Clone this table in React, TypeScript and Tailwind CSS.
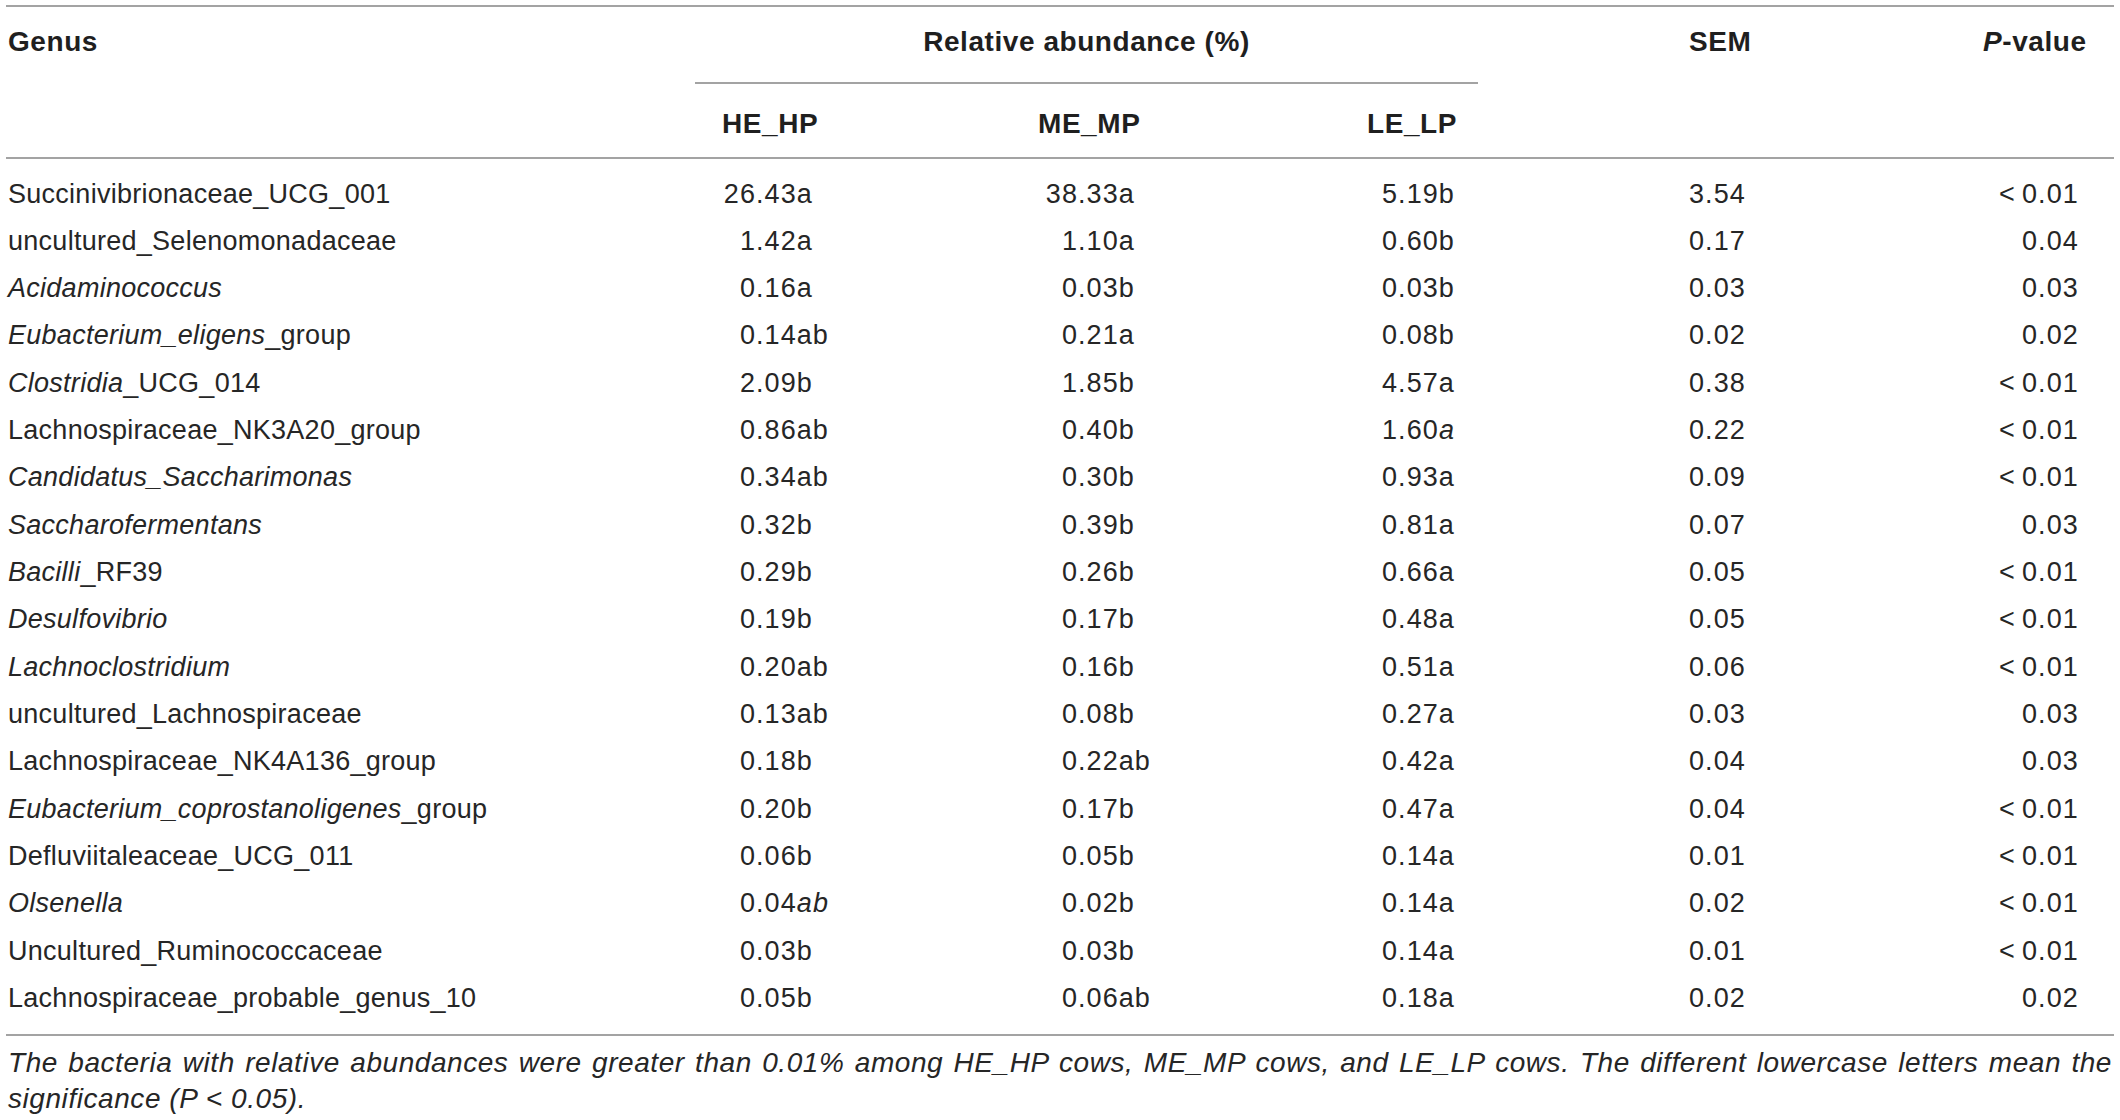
import React from "react";

// genus text: parts wrapped in * are italic
// value text: part after * is italic
const rows: [string, string, string, string, string, string][] = [
  ["Succinivibrionaceae_UCG_001", "26.43a", "38.33a", "5.19b", "3.54", "<0.01"],
  ["uncultured_Selenomonadaceae", "1.42a", "1.10a", "0.60b", "0.17", "0.04"],
  ["*Acidaminococcus*", "0.16a", "0.03b", "0.03b", "0.03", "0.03"],
  ["*Eubacterium_eligens*_group", "0.14ab", "0.21a", "0.08b", "0.02", "0.02"],
  ["*Clostridia*_UCG_014", "2.09b", "1.85b", "4.57a", "0.38", "<0.01"],
  ["Lachnospiraceae_NK3A20_group", "0.86ab", "0.40b", "1.60*a", "0.22", "<0.01"],
  ["*Candidatus_Saccharimonas*", "0.34ab", "0.30b", "0.93a", "0.09", "<0.01"],
  ["*Saccharofermentans*", "0.32b", "0.39b", "0.81a", "0.07", "0.03"],
  ["*Bacilli*_RF39", "0.29b", "0.26b", "0.66a", "0.05", "<0.01"],
  ["*Desulfovibrio*", "0.19b", "0.17b", "0.48a", "0.05", "<0.01"],
  ["*Lachnoclostridium*", "0.20ab", "0.16b", "0.51a", "0.06", "<0.01"],
  ["uncultured_Lachnospiraceae", "0.13ab", "0.08b", "0.27a", "0.03", "0.03"],
  ["Lachnospiraceae_NK4A136_group", "0.18b", "0.22ab", "0.42a", "0.04", "0.03"],
  ["*Eubacterium_coprostanoligenes*_group", "0.20b", "0.17b", "0.47a", "0.04", "<0.01"],
  ["Defluviitaleaceae_UCG_011", "0.06b", "0.05b", "0.14a", "0.01", "<0.01"],
  ["*Olsenella*", "0.04*ab", "0.02b", "0.14a", "0.02", "<0.01"],
  ["Uncultured_Ruminococcaceae", "0.03b", "0.03b", "0.14a", "0.01", "<0.01"],
  ["Lachnospiraceae_probable_genus_10", "0.05b", "0.06ab", "0.18a", "0.02", "0.02"],
];

const grid = "grid grid-cols-[716px_316px_329px_322px_294px_1fr]";

function Genus({ text }: { text: string }) {
  const parts = text.split("*");
  return (
    <>
      {parts.map((p, i) =>
        i % 2 === 1 ? (
          <i key={i}>{p}</i>
        ) : (
          <span key={i}>{p}</span>
        )
      )}
    </>
  );
}

// decimal aligned value: integer part sits in a fixed right-aligned slot
function Num({ v, slot }: { v: string; slot: string }) {
  const [main, it] = v.split("*");
  const dot = main.indexOf(".");
  return (
    <>
      <span className={`inline-block text-right ${slot}`}>{main.slice(0, dot)}</span>
      <span>{main.slice(dot)}</span>
      {it && <i>{it}</i>}
    </>
  );
}

function Plain({ v }: { v: string }) {
  const [main, it] = v.split("*");
  return (
    <>
      {main}
      {it && <i>{it}</i>}
    </>
  );
}

export default function App() {
  return (
    <div className="w-[2120px] h-[1120px] bg-white px-[6px] pt-[5px] font-['Liberation_Sans',Arial,sans-serif] text-[27px] text-[#262626]">
      <div className="border-t-2 border-[#a3a3a3]" />

      {/* header, first level */}
      <div className="grid grid-cols-[689px_783px_211px_294px_1fr] font-bold text-[28px] tracking-[0.02em] leading-[70px] text-[#1f1f1f]">
        <div className="h-[77px] pl-[2px]">Genus</div>
        <div className="h-[77px] text-center border-b-2 border-[#a3a3a3]">Relative abundance (%)</div>
        <div />
        <div className="h-[77px]">SEM</div>
        <div className="h-[77px]">
          <i>P</i>-value
        </div>
      </div>

      {/* header, second level */}
      <div className={`${grid} h-[75px] border-b-2 border-[#a3a3a3] font-bold text-[28px] tracking-[0.02em] leading-[80px] text-[#1f1f1f]`}>
        <div />
        <div>HE_HP</div>
        <div>ME_MP</div>
        <div>LE_LP</div>
        <div />
        <div />
      </div>

      <div className="py-[11.5px]">
        {rows.map((r, idx) => (
          <div key={idx} className={`${grid} h-[47.33px] leading-[47.33px] whitespace-nowrap`}>
            <div className="pl-[2px] tracking-[0.01em]">
              <Genus text={r[0]} />
            </div>
            <div className="tracking-[0.04em]">
              <Num v={r[1]} slot="w-[34px]" />
            </div>
            <div className="tracking-[0.04em]">
              <Num v={r[2]} slot="w-[40px]" />
            </div>
            <div className="pl-[15px] tracking-[0.04em]">
              <Plain v={r[3]} />
            </div>
            <div className="tracking-[0.04em]">
              <Plain v={r[4]} />
            </div>
            <div className="tracking-[0.04em]">
              <span className="inline-block w-[39px] pl-[16px]">{r[5].startsWith("<") ? "<" : ""}</span>
              {r[5].replace("<", "")}
            </div>
          </div>
        ))}
      </div>

      <div className="border-t-2 border-[#a3a3a3]" />

      <div className="pt-[9px] px-[2px] italic text-[28px] leading-[36px] tracking-[0.02em]">
        <p className="text-justify [text-align-last:justify]">
          The bacteria with relative abundances were greater than 0.01% among HE_HP cows, ME_MP cows, and LE_LP cows. The different lowercase letters mean the
        </p>
        <p>significance (P &lt; 0.05).</p>
      </div>
    </div>
  );
}
